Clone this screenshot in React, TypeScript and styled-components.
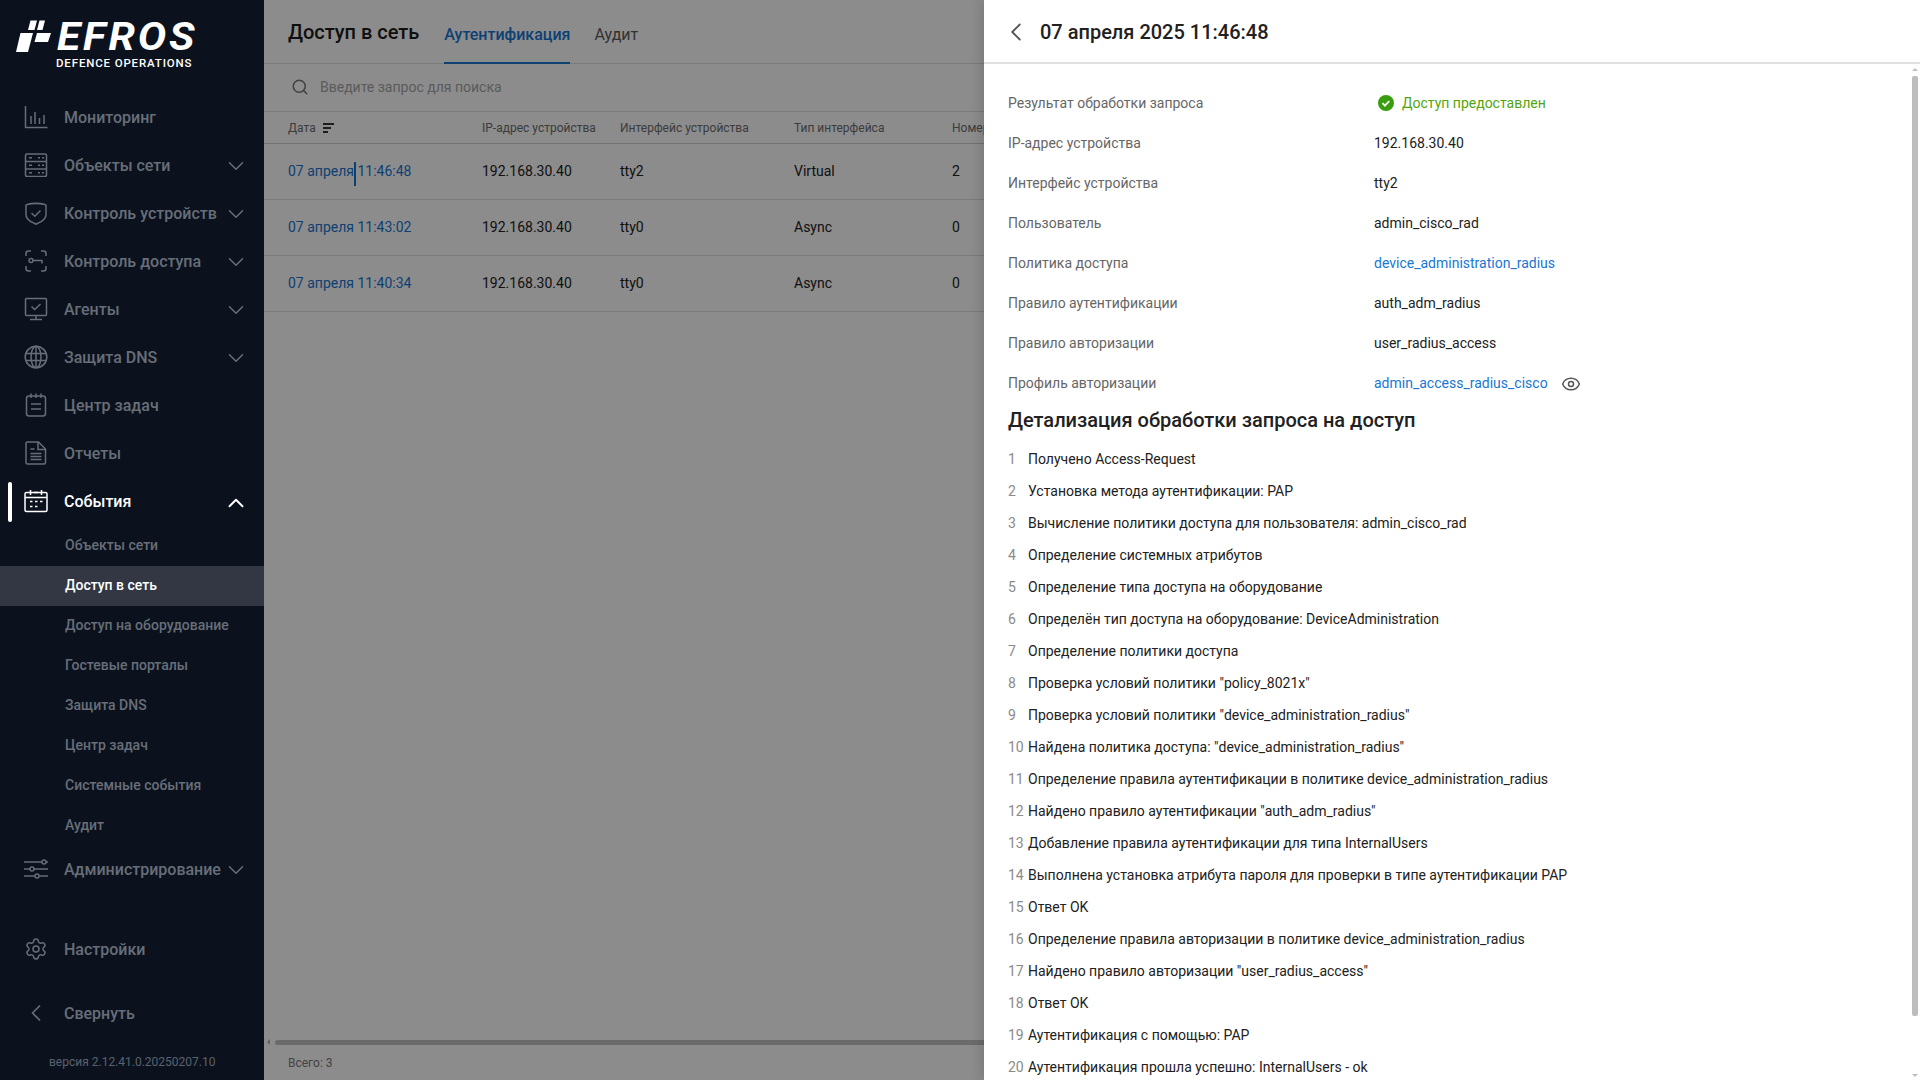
import React from 'react';
import styled, { createGlobalStyle } from 'styled-components';
import { ChevronDown, ChevronLeft, ChevronUp, Eye, Search, Settings } from 'lucide-react';

const GlobalStyle = createGlobalStyle`
  html, body {
    margin:0;
    height:100%;
    background:#fff;
    font-family:Roboto, "Noto Sans", sans-serif;
  }
  * {
    box-sizing:border-box;
  }
`;

const Layout = styled.div`
  display:flex;
  width:100%;
  height:100vh;
  overflow:hidden;
`;

/* ---------- sidebar ---------- */

const Sidebar = styled.aside`
  display:flex;
  flex-direction:column;
  flex:0 0 264px;
  height:100%;
  background:#0b121e;
`;

const LogoBlock = styled.div`
  display:flex;
  align-items:flex-start;
  height:93px;
  padding:20px 0 0 16px;
`;

const LogoMark = styled.svg`
  flex:none;
  width:38px;
  height:32px;
`;

const LogoWords = styled.div`
  display:flex;
  flex-direction:column;
  margin-left:3px;
`;

const LogoName = styled.span`
  font-size:38px;
  line-height:34px;
  height:34px;
  font-weight:700;
  font-style:italic;
  letter-spacing:2.5px;
  color:#fff;
  transform:scaleX(1.12);
  transform-origin:left center;
`;

const LogoSub = styled.span`
  margin:2px 0 0 -1px;
  font-size:11.5px;
  line-height:14px;
  font-weight:500;
  letter-spacing:.85px;
  color:#fff;
  white-space:nowrap;
`;

const MenuItem = styled.div<{ $active?: boolean }>`
  position:relative;
  display:flex;
  align-items:center;
  flex:none;
  height:48px;
  padding-left:24px;
  color:${p => (p.$active ? '#fff' : '#686e78')};
  font-size:16px;
  font-weight:500;
  ${p => p.$active && `
    &::before {
      content:'';
      position:absolute;
      left:8px;
      top:5px;
      width:4px;
      height:40px;
      border-radius:2px;
      background:#fff;
    }
  `}
`;

const MenuIcon = styled.svg`
  flex:none;
  width:24px;
  height:24px;
  margin-right:16px;
  fill:none;
  stroke:currentColor;
  stroke-width:1.5;
`;

const MenuLabel = styled.span`
  flex:1;
  white-space:nowrap;
`;

const Arrow = styled.span<{ $up?: boolean }>`
  display:flex;
  flex:none;
  margin-right:15px;
  padding-top:${p => (p.$up ? '4px' : '2px')};
`;

const SubMenu = styled.div`
  display:flex;
  flex-direction:column;
  margin-top:1px;
  margin-bottom:-1px;
`;

const SubItem = styled.div<{ $active?: boolean }>`
  display:flex;
  align-items:center;
  height:40px;
  padding:0 0 2px 65px;
  font-size:14px;
  font-weight:500;
  color:${p => (p.$active ? '#fff' : '#686e78')};
  background:${p => (p.$active ? '#323743' : 'transparent')};
`;

const SideFooter = styled.div`
  display:flex;
  flex-direction:column;
  margin-top:auto;
`;

const CollapseRow = styled(MenuItem)`
  margin-top:16px;
`;

const Version = styled.div`
  height:43px;
  padding:17px 0 0 49px;
  font-size:12px;
  line-height:16px;
  color:#5b626d;
  white-space:nowrap;
`;

/* ---------- main (dimmed) ---------- */

const Main = styled.main`
  position:relative;
  display:flex;
  flex-direction:column;
  flex:1;
  min-width:0;
  height:100%;
  background:#fff;
`;

const TopBar = styled.div`
  display:flex;
  align-items:stretch;
  flex:none;
  height:64px;
  padding-left:24px;
  border-bottom:1px solid #e2e2e2;
`;

const PageTitle = styled.h1`
  margin:0 25px 0 0;
  font-size:20px;
  line-height:64px;
  font-weight:500;
  color:#1c1c1c;
`;

const Tab = styled.div<{ $active?: boolean }>`
  display:flex;
  align-items:center;
  height:64px;
  margin-right:24px;
  padding-top:7px;
  font-size:16px;
  font-weight:${p => (p.$active ? 500 : 400)};
  color:${p => (p.$active ? '#1976d2' : '#5c5c5c')};
  border-bottom:2px solid ${p => (p.$active ? '#1976d2' : 'transparent')};
`;

const SearchRow = styled.div`
  display:flex;
  align-items:center;
  flex:none;
  height:48px;
  padding:0 0 1px 27px;
  gap:11px;
  font-size:14px;
  color:#a6a6a6;
  border-bottom:1px solid #e2e2e2;
`;

const TableRow = styled.div<{ $head?: boolean }>`
  display:grid;
  grid-template-columns:194px 138px 174px 158px 160px 1fr;
  align-items:center;
  flex:none;
  height:${p => (p.$head ? '32px' : '56px')};
  padding:${p => (p.$head ? '0 0 0 24px' : '0 0 2px 24px')};
  font-size:${p => (p.$head ? '12px' : '14px')};
  color:${p => (p.$head ? '#6e6e6e' : '#212121')};
  border-bottom:1px solid ${p => (p.$head ? '#cfcfcf' : '#e2e2e2')};
  white-space:nowrap;
`;

const HeadDate = styled.span`
  display:flex;
  align-items:center;
  gap:7px;
`;

const SortIcon = styled.svg`
  width:11px;
  height:10px;
  fill:#3a3a3a;
`;

const DateLink = styled.span`
  color:#1976d2;
`;

const Caret = styled.span`
  position:relative;
  display:inline-block;
  width:0;
  &::after {
    content:'';
    position:absolute;
    left:0;
    top:-14px;
    width:2px;
    height:24px;
    background:#1976d2;
  }
`;

const TableSpace = styled.div`
  flex:1;
`;

const HScroll = styled.div`
  display:flex;
  align-items:center;
  flex:none;
  height:6px;
  padding-left:3px;
  gap:5px;
`;

const HArrow = styled.span`
  width:0;
  height:0;
  border-style:solid;
  border-width:3px 3px 3px 0;
  border-color:transparent #b5b5b5 transparent transparent;
`;

const HThumb = styled.span`
  flex:1;
  height:5px;
  border-radius:3px;
  background:#c4c4c4;
`;

const TotalBar = styled.div`
  flex:none;
  height:35px;
  padding:10px 0 0 24px;
  font-size:12px;
  line-height:16px;
  color:#7a7a7a;
`;

const Backdrop = styled.div`
  position:absolute;
  inset:0;
  background:rgba(0,0,0,.45);
`;

/* ---------- drawer ---------- */

const Drawer = styled.section`
  position:absolute;
  top:0;
  right:0;
  bottom:0;
  display:flex;
  flex-direction:column;
  width:936px;
  background:#fff;
  box-shadow:-4px 0 10px rgba(0,0,0,.12);
`;

const DrawerHead = styled.header`
  display:flex;
  align-items:center;
  flex:none;
  height:64px;
  padding:2px 0 0 17px;
  border-bottom:2px solid #e0e0e0;
  color:#555;
`;

const DrawerTitle = styled.h2`
  margin:0 0 0 9px;
  font-size:20px;
  font-weight:500;
  color:#212121;
`;

const DrawerBody = styled.div`
  flex:1;
  min-height:0;
  overflow:hidden;
  padding:19px 0 0 24px;
`;

/* headless chrome hides native scrollbars, so this one is drawn over the drawer */
const VScroll = styled.div`
  position:absolute;
  top:68px;
  right:2px;
  bottom:3px;
  display:flex;
  flex-direction:column;
  align-items:center;
  width:6px;
`;

const VArrow = styled.span<{ $down?: boolean }>`
  flex:none;
  width:0;
  height:0;
  border-style:solid;
  border-color:transparent;
  border-width:${p => (p.$down ? '3px 3px 0' : '0 3px 3px')};
  border-top-color:${p => (p.$down ? '#bdbdbd' : 'transparent')};
  border-bottom-color:${p => (p.$down ? 'transparent' : '#bdbdbd')};
`;

const VThumb = styled.span`
  flex:none;
  width:6px;
  height:940px;
  margin:5px 0 auto;
  border-radius:2px;
  background:#bdbdbd;
`;

const InfoRow = styled.div`
  display:grid;
  grid-template-columns:366px 1fr;
  align-items:center;
  height:40px;
  font-size:14px;
  color:#212121;
`;

const InfoLabel = styled.span`
  color:#666;
`;

const InfoValue = styled.span`
  display:flex;
  align-items:center;
`;

const Link = styled.span`
  color:#1976d2;
`;

const StatusOk = styled.span`
  display:flex;
  align-items:center;
  gap:8px;
  padding-left:4px;
  color:#52a50f;
`;

const EyeBtn = styled.span`
  display:flex;
  margin:1px 0 0 13px;
  color:#555;
`;

const SectionTitle = styled.h3`
  margin:1px 0 0;
  font-size:20px;
  line-height:32px;
  font-weight:500;
  color:#212121;
`;

const LogList = styled.ol`
  margin:7px 0 0;
  padding:0;
  list-style:none;
`;

const LogRow = styled.li`
  display:flex;
  align-items:center;
  height:32px;
  font-size:14px;
  color:#212121;
  white-space:nowrap;
`;

const LogNum = styled.span`
  flex:none;
  width:20px;
  color:#8a8a8a;
`;

const menuTop = [
  { label: 'Мониторинг', icon: 'chart' },
  { label: 'Объекты сети', icon: 'server', arrow: true },
  { label: 'Контроль устройств', icon: 'shield', arrow: true },
  { label: 'Контроль доступа', icon: 'scan', arrow: true },
  { label: 'Агенты', icon: 'monitor', arrow: true },
  { label: 'Защита DNS', icon: 'globe', arrow: true },
  { label: 'Центр задач', icon: 'tasks' },
  { label: 'Отчеты', icon: 'file' },
];

const subMenu = ['Объекты сети', 'Доступ в сеть', 'Доступ на оборудование', 'Гостевые порталы', 'Защита DNS', 'Центр задач', 'Системные события', 'Аудит'];

const rows = [
  { time: '11:46:48', iface: 'tty2', type: 'Virtual', num: '2', caret: true },
  { time: '11:43:02', iface: 'tty0', type: 'Async', num: '0' },
  { time: '11:40:34', iface: 'tty0', type: 'Async', num: '0' },
];

const logLines = [
  'Получено Access-Request',
  'Установка метода аутентификации: PAP',
  'Вычисление политики доступа для пользователя: admin_cisco_rad',
  'Определение системных атрибутов',
  'Определение типа доступа на оборудование',
  'Определён тип доступа на оборудование: DeviceAdministration',
  'Определение политики доступа',
  'Проверка условий политики "policy_8021x"',
  'Проверка условий политики "device_administration_radius"',
  'Найдена политика доступа: "device_administration_radius"',
  'Определение правила аутентификации в политике device_administration_radius',
  'Найдено правило аутентификации "auth_adm_radius"',
  'Добавление правила аутентификации для типа InternalUsers',
  'Выполнена установка атрибута пароля для проверки в типе аутентификации PAP',
  'Ответ OK',
  'Определение правила авторизации в политике device_administration_radius',
  'Найдено правило авторизации "user_radius_access"',
  'Ответ OK',
  'Аутентификация с помощью: PAP',
  'Аутентификация прошла успешно: InternalUsers - ok',
];

function NavIcon({ name }: { name: string }) {
  switch (name) {
    case 'chart':
      return (
        <MenuIcon viewBox="0 0 24 24">
          <path d="M1.5 1v21.5H23.5M7 11v8M11 7v12M15.5 13v6M20 10v9" />
        </MenuIcon>
      );
    case 'server':
      return (
        <MenuIcon viewBox="0 0 24 24">
          <rect x="1.5" y="1" width="21" height="22.5" rx="1.5" />
          <path d="M1.5 8.5h21M1.5 16h21M5 4.8h3M14 4.8h2M18 4.8h2M5 12.2h3M14 12.2h2M18 12.2h2M5 19.8h3M14 19.8h2M18 19.8h2" />
        </MenuIcon>
      );
    case 'shield':
      return (
        <MenuIcon viewBox="0 0 24 24">
          <path d="M3 3.5c6-1.5 12-1.5 18 0 .6 0 1 .4 1 1v9c0 3-1.8 5-4.5 6.8L12 23.2l-5.500-2.900C3.800 18.500 2 16.500 2 13.500v-9c0-.6.400-1 1-1z" />
          <path d="M7.500 12l3.300 3.200 5.700-5.700" />
        </MenuIcon>
      );
    case 'scan':
      return (
        <MenuIcon viewBox="0 0 24 24">
          <path d="M2 7V4.500A2.500 2.500 0 0 1 4.500 2H7M17 2h2.500A2.500 2.500 0 0 1 22 4.500V7M22 17v2.500a2.500 2.500 0 0 1-2.500 2.500H17M7 22H4.500A2.500 2.500 0 0 1 2 19.500V17" />
          <circle cx="7" cy="11.500" r="2" />
          <path d="M9 11.500h9v3" />
        </MenuIcon>
      );
    case 'monitor':
      return (
        <MenuIcon viewBox="0 0 24 24">
          <rect x="1.500" y="1.500" width="21" height="17" rx="1" />
          <path d="M12 18.500v3.500M6 22.500h12M7.500 9.500l3.200 3 5.800-5.500" />
        </MenuIcon>
      );
    case 'globe':
      return (
        <MenuIcon viewBox="0 0 24 24">
          <circle cx="12" cy="12" r="10.800" />
          <ellipse cx="12" cy="12" rx="5" ry="10.800" />
          <path d="M12 1.200v21.600M1.800 8.500h20.400M1.800 15.500h20.400" />
        </MenuIcon>
      );
    case 'tasks':
      return (
        <MenuIcon viewBox="0 0 24 24">
          <rect x="2.500" y="3" width="19" height="20" rx="2.500" />
          <path d="M7 .5V5M12 .5V5M17 .5V5M7 11h10M7 16h10" />
        </MenuIcon>
      );
    case 'file':
      return (
        <MenuIcon viewBox="0 0 24 24">
          <path d="M3.500 1h11l7 7v13.500a1.500 1.500 0 0 1-1.500 1.500H3.500A1.500 1.500 0 0 1 2 21.500v-19A1.500 1.500 0 0 1 3.500 1z" />
          <path d="M14 1v7.500h7.500M6.500 8h4M6.500 12.500h11M6.500 15.500h11M6.500 18.500h11" />
        </MenuIcon>
      );
    case 'calendar':
      return (
        <MenuIcon viewBox="0 0 24 24">
          <rect x="1" y="3.500" width="22" height="19" rx="1.500" />
          <path d="M1 8.500h22M6.500 1v5M17.500 1v5M10 3.500h4M6 12.500h2.500M11 12.500h2.500M16 12.500h2.500M6 17.500h2.500M11 17.500h2.500" />
        </MenuIcon>
      );
    default:
      return (
        <MenuIcon viewBox="0 0 24 24">
          <path d="M0 5h18M22 5h2M0 12h6M10 12h14M0 19h11M15 19h9" />
          <circle cx="20" cy="5" r="2" />
          <circle cx="8" cy="12" r="2" />
          <circle cx="13" cy="19" r="2" />
        </MenuIcon>
      );
  }
}

function App() {
  return (
    <Layout>
      <GlobalStyle />
      <Sidebar>
        <LogoBlock>
          <LogoMark viewBox="0 0 38 32">
            <polygon fill="#fff" points="14.500,0.500 21,0.500 18.500,10 12,10" />
            <polygon fill="#fff" points="23.500,0.500 29,0.500 26.500,10 21,10" />
            <polygon fill="#fff" points="4.500,13 17,13 12,32 0,32" />
            <polygon fill="#fff" points="21,13 35,13 32,22 18.500,22" />
          </LogoMark>
          <LogoWords>
            <LogoName>EFROS</LogoName>
            <LogoSub>DEFENCE OPERATIONS</LogoSub>
          </LogoWords>
        </LogoBlock>
        {menuTop.map(item => (
          <MenuItem key={item.label}>
            <NavIcon name={item.icon} />
            <MenuLabel>{item.label}</MenuLabel>
            {item.arrow && <Arrow><ChevronDown size={26} strokeWidth={1.4} /></Arrow>}
          </MenuItem>
        ))}
        <MenuItem $active>
          <NavIcon name="calendar" />
          <MenuLabel>События</MenuLabel>
          <Arrow $up><ChevronUp size={26} strokeWidth={1.8} /></Arrow>
        </MenuItem>
        <SubMenu>
          {subMenu.map((label, index) => (
            <SubItem key={index} $active={index === 1}>{label}</SubItem>
          ))}
        </SubMenu>
        <MenuItem>
          <NavIcon name="sliders" />
          <MenuLabel>Администрирование</MenuLabel>
          <Arrow><ChevronDown size={26} strokeWidth={1.4} /></Arrow>
        </MenuItem>
        <SideFooter>
          <MenuItem>
            <Settings size={24} strokeWidth={1.5} style={{ marginRight: 16 }} />
            <MenuLabel>Настройки</MenuLabel>
          </MenuItem>
          <CollapseRow>
            <ChevronLeft size={28} strokeWidth={1.5} style={{ marginLeft: -2, marginRight: 14 }} />
            <MenuLabel>Свернуть</MenuLabel>
          </CollapseRow>
          <Version>версия 2.12.41.0.20250207.10</Version>
        </SideFooter>
      </Sidebar>

      <Main>
        <TopBar>
          <PageTitle>Доступ в сеть</PageTitle>
          <Tab $active>Аутентификация</Tab>
          <Tab>Аудит</Tab>
        </TopBar>
        <SearchRow>
          <Search size={18} color="#777" strokeWidth={2} />
          Введите запрос для поиска
        </SearchRow>
        <TableRow $head>
          <HeadDate>
            Дата
            <SortIcon viewBox="0 0 11 10">
              <rect width="11" height="2" />
              <rect y="4" width="8" height="2" />
              <rect y="8" width="5" height="2" />
            </SortIcon>
          </HeadDate>
          <span>IP-адрес устройства</span>
          <span>Интерфейс устройства</span>
          <span>Тип интерфейса</span>
          <span>Номер порта</span>
          <span />
        </TableRow>
        {rows.map(row => (
          <TableRow key={row.time}>
            <DateLink>07 апреля{row.caret && <Caret />} {row.time}</DateLink>
            <span>192.168.30.40</span>
            <span>{row.iface}</span>
            <span>{row.type}</span>
            <span>{row.num}</span>
            <span />
          </TableRow>
        ))}
        <TableSpace />
        <HScroll>
          <HArrow />
          <HThumb />
        </HScroll>
        <TotalBar>Всего: 3</TotalBar>

        <Backdrop />

        <Drawer>
          <DrawerHead>
            <ChevronLeft size={30} strokeWidth={1.5} />
            <DrawerTitle>07 апреля 2025 11:46:48</DrawerTitle>
          </DrawerHead>
          <DrawerBody>
            <InfoRow>
              <InfoLabel>Результат обработки запроса</InfoLabel>
              <StatusOk>
                <svg width="16" height="16" viewBox="0 0 16 16">
                  <circle cx="8" cy="8" r="8" fill="#389e0d" />
                  <path d="M4.500 8.200l2.400 2.400 4.400-4.600" fill="none" stroke="#fff" strokeWidth="1.800" />
                </svg>
                Доступ предоставлен
              </StatusOk>
            </InfoRow>
            <InfoRow>
              <InfoLabel>IP-адрес устройства</InfoLabel>
              <InfoValue>192.168.30.40</InfoValue>
            </InfoRow>
            <InfoRow>
              <InfoLabel>Интерфейс устройства</InfoLabel>
              <InfoValue>tty2</InfoValue>
            </InfoRow>
            <InfoRow>
              <InfoLabel>Пользователь</InfoLabel>
              <InfoValue>admin_cisco_rad</InfoValue>
            </InfoRow>
            <InfoRow>
              <InfoLabel>Политика доступа</InfoLabel>
              <InfoValue><Link>device_administration_radius</Link></InfoValue>
            </InfoRow>
            <InfoRow>
              <InfoLabel>Правило аутентификации</InfoLabel>
              <InfoValue>auth_adm_radius</InfoValue>
            </InfoRow>
            <InfoRow>
              <InfoLabel>Правило авторизации</InfoLabel>
              <InfoValue>user_radius_access</InfoValue>
            </InfoRow>
            <InfoRow>
              <InfoLabel>Профиль авторизации</InfoLabel>
              <InfoValue>
                <Link>admin_access_radius_cisco</Link>
                <EyeBtn><Eye size={20} strokeWidth={1.8} /></EyeBtn>
              </InfoValue>
            </InfoRow>
            <SectionTitle>Детализация обработки запроса на доступ</SectionTitle>
            <LogList>
              {logLines.map((line, index) => (
                <LogRow key={index}>
                  <LogNum>{index + 1}</LogNum>
                  {line}
                </LogRow>
              ))}
            </LogList>
          </DrawerBody>
          <VScroll>
            <VArrow />
            <VThumb />
            <VArrow $down />
          </VScroll>
        </Drawer>
      </Main>
    </Layout>
  );
}

export default App;
